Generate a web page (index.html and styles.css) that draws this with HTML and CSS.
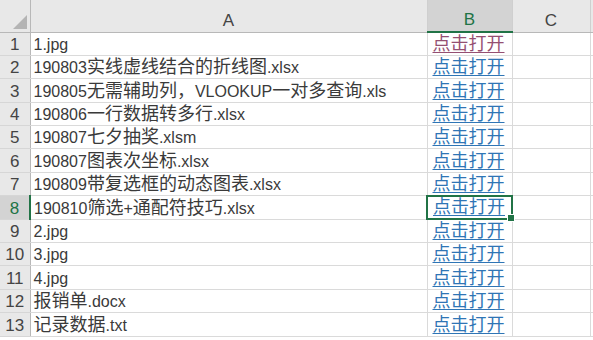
FILE: index.html
```html
<!DOCTYPE html>
<html>
    <head>
        <title>文件列表</title>
        <link rel="stylesheet" href="styles.css">
    </head>
    <body>
        <table class="sheet">
            <colgroup>
                <col class="c-idx">
                <col class="c-a">
                <col class="c-b">
                <col class="c-c">
                <col class="c-d">
            </colgroup>
            <thead>
                <tr>
                    <th class="corner"><span class="tri"></span></th>
                    <th>A</th>
                    <th class="col-sel">B</th>
                    <th>C</th>
                    <th></th>
                </tr>
            </thead>
            <tbody>
                <tr><th>1</th><td>1.jpg</td><td><a class="link visited"><span class="zh">点击打开</span></a></td><td></td><td></td></tr>
                <tr><th>2</th><td>190803<span class="zh">实线虚线结合的折线图</span>.xlsx</td><td><a class="link"><span class="zh">点击打开</span></a></td><td></td><td></td></tr>
                <tr><th>3</th><td>190805<span class="zh">无需辅助列，</span>VLOOKUP<span class="zh">一对多查询</span>.xls</td><td><a class="link"><span class="zh">点击打开</span></a></td><td></td><td></td></tr>
                <tr><th>4</th><td>190806<span class="zh">一行数据转多行</span>.xlsx</td><td><a class="link"><span class="zh">点击打开</span></a></td><td></td><td></td></tr>
                <tr><th>5</th><td>190807<span class="zh">七夕抽奖</span>.xlsm</td><td><a class="link"><span class="zh">点击打开</span></a></td><td></td><td></td></tr>
                <tr><th>6</th><td>190807<span class="zh">图表次坐标</span>.xlsx</td><td><a class="link"><span class="zh">点击打开</span></a></td><td></td><td></td></tr>
                <tr><th>7</th><td>190809<span class="zh">带复选框的动态图表</span>.xlsx</td><td><a class="link"><span class="zh">点击打开</span></a></td><td></td><td></td></tr>
                <tr><th class="row-sel">8</th><td>190810<span class="zh">筛选</span>+<span class="zh">通配符技巧</span>.xlsx</td><td class="active"><a class="link"><span class="zh">点击打开</span></a><span class="handle"></span></td><td></td><td></td></tr>
                <tr><th>9</th><td>2.jpg</td><td><a class="link"><span class="zh">点击打开</span></a></td><td></td><td></td></tr>
                <tr><th>10</th><td>3.jpg</td><td><a class="link"><span class="zh">点击打开</span></a></td><td></td><td></td></tr>
                <tr><th>11</th><td>4.jpg</td><td><a class="link"><span class="zh">点击打开</span></a></td><td></td><td></td></tr>
                <tr><th>12</th><td><span class="zh">报销单</span>.docx</td><td><a class="link"><span class="zh">点击打开</span></a></td><td></td><td></td></tr>
                <tr><th>13</th><td><span class="zh">记录数据</span>.txt</td><td><a class="link"><span class="zh">点击打开</span></a></td><td></td><td></td></tr>
            </tbody>
        </table>
    </body>
</html>
```

FILE: styles.css
```css
body {
    margin: 0;
    width: 593px;
    height: 340px;
    overflow: hidden;
    background: #ffffff;
    font-family: "Liberation Sans", "Noto Sans CJK SC", sans-serif;
    font-size: 16px;
    color: #3a3a3a;
}

table.sheet {
    border-collapse: collapse;
    table-layout: fixed;
    width: 620px;
}

col.c-idx { width: 30px; }
col.c-a { width: 397px; }
col.c-b { width: 85px; }
col.c-c { width: 78px; }
col.c-d { width: 30px; }

.sheet th,
.sheet td {
    padding: 0;
    white-space: nowrap;
    overflow: hidden;
}

.sheet thead tr {
    height: 32px;
}

.sheet thead th {
    background: #e8e8e8;
    border-right: 1px solid #cfcfcf;
    border-bottom: 1px solid #b8b8b8;
    font-weight: normal;
    font-size: 17px;
    vertical-align: bottom;
    line-height: 18px;
    padding-bottom: 2px;
    color: #444444;
}

.sheet thead th.corner {
    position: relative;
    border-right: 1px solid #b8b8b8;
}

.tri {
    position: absolute;
    right: 3px;
    bottom: 3px;
    width: 0;
    height: 0;
    border-left: 14px solid transparent;
    border-bottom: 14px solid #b4b4b4;
}

.sheet thead th.col-sel {
    background: #d3d3d3;
    color: #217346;
    border-bottom: 2px solid #217346;
}

.sheet tbody tr {
    height: 23.4px;
}

.sheet tbody th {
    background: #e8e8e8;
    border-right: 1px solid #b8b8b8;
    border-bottom: 1px solid #d6d6d6;
    font-weight: normal;
    font-size: 17px;
    text-align: center;
    vertical-align: bottom;
    line-height: 18px;
    padding-bottom: 1px;
    color: #444444;
}

.sheet tbody th.row-sel {
    background: #d3d3d3;
    color: #217346;
    border-right: 2px solid #217346;
}

.sheet td {
    border-right: 1px solid #dadada;
    border-bottom: 1px solid #dadada;
    vertical-align: bottom;
    line-height: 18px;
    padding-left: 3px;
    padding-bottom: 1px;
}

.zh {
    font-size: 18px;
    line-height: 18px;
}

.link {
    color: #2f75b5;
    text-decoration: underline;
    text-underline-offset: 2px;
    padding-left: 2px;
}

.link.visited {
    color: #954f72;
}

.sheet td.active {
    position: relative;
    border: 2px solid #217346;
    overflow: visible;
}

.handle {
    position: absolute;
    right: -4px;
    bottom: -4px;
    width: 6px;
    height: 6px;
    background: #217346;
    border: 1px solid #ffffff;
}
```
